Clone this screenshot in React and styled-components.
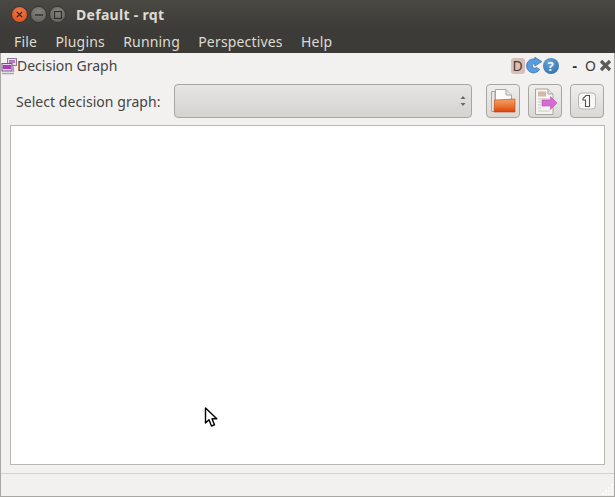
import styled, { createGlobalStyle } from "styled-components";

const GlobalStyle = createGlobalStyle`
  html, body {
    margin: 0;
    padding: 0;
    background: #f2f1f0;
    overflow: hidden;
  }
`;

const menus = ["File", "Plugins", "Running", "Perspectives", "Help"];

const App = () => {
  return (
    <Window>
      <GlobalStyle />
      <TitleBar>
        <WindowButtons>
          <CloseButton>
            <svg width="7" height="7" viewBox="0 0 8 8">
              <path d="M1 1 L7 7 M7 1 L1 7" stroke="#3a2018" strokeWidth="1.6" />
            </svg>
          </CloseButton>
          <WindowButton>
            <svg width="8" height="8" viewBox="0 0 8 8">
              <path d="M0 4 H8" stroke="#2f2e2a" strokeWidth="1.4" />
            </svg>
          </WindowButton>
          <WindowButton>
            <svg width="8" height="8" viewBox="0 0 8 8">
              <rect x="0.5" y="0.5" width="7" height="7" fill="none" stroke="#2f2e2a" strokeWidth="1.2" />
            </svg>
          </WindowButton>
        </WindowButtons>
        <WindowTitle>Default - rqt</WindowTitle>
      </TitleBar>
      <MenuBar>
        {menus.map((menu) => (
          <MenuItem key={menu}>{menu}</MenuItem>
        ))}
      </MenuBar>
      <Body>
        <DockTitle>
          <DockLabel>
            <GraphIcon />
            <span>Decision Graph</span>
          </DockLabel>
          <DockActions>
            <DBadge>D</DBadge>
            <ReloadIcon />
            <HelpBadge>?</HelpBadge>
            <DockDash>-</DockDash>
            <DockFloat>O</DockFloat>
            <CloseIcon />
          </DockActions>
        </DockTitle>
        <Toolbar>
          <SelectLabel>Select decision graph:</SelectLabel>
          <Select>
            <svg width="8" height="14" viewBox="0 0 8 14">
              <path d="M4 2 L6.5 5 H1.5 Z M4 12 L1.5 9 H6.5 Z" fill="#6b6963" />
            </svg>
          </Select>
          <ToolButton $gap={14}>
            <FolderIcon />
          </ToolButton>
          <ToolButton>
            <ExportIcon />
          </ToolButton>
          <ToolButton>
            <OneIcon />
          </ToolButton>
        </Toolbar>
        <Canvas />
        <StatusBar>
          <svg width="12" height="12" viewBox="0 0 12 12">
            <g fill="#fbfbfa">
              <rect x="10" y="1" width="2" height="2" />
              <rect x="7" y="4" width="2" height="2" />
              <rect x="10" y="4" width="2" height="2" />
              <rect x="4" y="7" width="2" height="2" />
              <rect x="7" y="7" width="2" height="2" />
              <rect x="10" y="7" width="2" height="2" />
              <rect x="1" y="10" width="2" height="2" />
              <rect x="4" y="10" width="2" height="2" />
              <rect x="7" y="10" width="2" height="2" />
              <rect x="10" y="10" width="2" height="2" />
            </g>
          </svg>
        </StatusBar>
      </Body>
      <Cursor>
        <svg width="16" height="22" viewBox="0 0 16 22">
          <path
            d="M1.5 1 L1.5 16 L5 12.8 L7.5 19 L10.5 17.8 L8 11.8 L12.8 11.8 Z"
            fill="#fff"
            stroke="#000"
            strokeWidth="1.4"
            strokeLinejoin="round"
          />
        </svg>
      </Cursor>
    </Window>
  );
};

const GraphIcon = () => (
  <svg width="16" height="18" viewBox="0 0 16 18">
    <rect x="6.5" y="1.5" width="9" height="7" fill="#e4dcea" stroke="#8a7a98" />
    <rect x="8" y="3" width="6" height="3" fill="#b07cc0" />
    <rect x="1" y="6.5" width="10" height="7.5" fill="#e8d5ee" stroke="#7d4f8f" />
    <rect x="2" y="8" width="8" height="4" fill="#a63fb5" />
    <path d="M1 16.5 H13 M12.5 9.5 V15" stroke="#a9a7a4" strokeWidth="1.4" fill="none" />
  </svg>
);

const ReloadIcon = () => (
  <svg width="16" height="17" viewBox="0 0 16 17">
    <path
      d="M13.6 12.4 A7 7 0 1 1 8.8 2 L8.8 0.3 L15.8 4.6 L8.8 9 L8.8 6.6 A2.3 2.3 0 1 0 10.4 10.4 Z"
      fill="#5a9ce0"
      stroke="#2c68a8"
      strokeWidth="0.7"
    />
  </svg>
);

const CloseIcon = () => (
  <svg width="13" height="13" viewBox="0 0 13 13">
    <path d="M2 2 L11 11 M11 2 L2 11" stroke="#5c5b58" strokeWidth="3.2" />
  </svg>
);

const FolderIcon = () => (
  <svg width="28" height="28" viewBox="0 0 28 28">
    <path d="M2.5 4.5 H6 V24.5 H2.5 Z" fill="#e8e6e2" stroke="#a8a69f" />
    <path d="M6.5 2.5 H17 L22.5 8 V15 H6.5 Z" fill="#fbfbfa" stroke="#a8a69f" />
    <path d="M17 2.5 V8 H22.5" fill="#e6e4e0" stroke="#a8a69f" />
    <path d="M5 25 L5.5 13 L26 12 V25 Z" fill="url(#folderFill)" stroke="#c8410f" strokeWidth="0.6" />
    <defs>
      <linearGradient id="folderFill" x1="0" y1="0" x2="0" y2="1">
        <stop offset="0" stopColor="#f2a468" />
        <stop offset="0.55" stopColor="#ec7230" />
        <stop offset="1" stopColor="#d7410c" />
      </linearGradient>
    </defs>
  </svg>
);

const ExportIcon = () => (
  <svg width="28" height="28" viewBox="0 0 28 28">
    <path d="M4.5 2 H17 L22 7 V27.5 H4.5 Z" fill="#f5f4f1" stroke="#a8a69f" />
    <path d="M17 2 V7 H22" fill="#e2e0dc" stroke="#a8a69f" />
    <rect x="7" y="4.5" width="8" height="5" fill="#d5b9a6" />
    <path d="M7 12 H19 M7 15 H10 M7 18 H10 M7 21 H10 M7 24 H19" stroke="#c9c7c2" />
    <path d="M11 13 H19.5 V9.5 L26 16 L19.5 22.5 V19 H11 Z" fill="#d86ad4" stroke="#bb4ab9" strokeWidth="0.6" />
  </svg>
);

const OneIcon = () => (
  <svg width="20" height="18" viewBox="0 0 20 18">
    <rect x="1.5" y="1" width="17" height="16" rx="3.5" fill="#f8f8f7" stroke="#b5b3ae" />
    <path d="M9 3.5 H12.5 V14.5 H8.5 V8 H6 V6.5 Z" fill="#fdfdfc" stroke="#55534e" strokeWidth="1.1" />
  </svg>
);

const Window = styled.div`
  position: relative;
  width: 615px;
  height: 497px;
  background: #3c3b37;
  font-family: "Noto Sans", "Open Sans", sans-serif;
  overflow: hidden;
`;

const TitleBar = styled.div`
  display: flex;
  align-items: center;
  height: 30px;
  padding: 0 0 0 11px;
  box-sizing: border-box;
  background: linear-gradient(#4a4944, #3c3b37);
`;

const WindowButtons = styled.div`
  display: flex;
  align-items: center;
  gap: 2px;
  margin-top: -1px;
`;

const WindowButton = styled.div`
  display: grid;
  place-items: center;
  width: 17px;
  height: 17px;
  box-sizing: border-box;
  border-radius: 50%;
  border: 1px solid #35342f;
  background: radial-gradient(circle at 50% 30%, #85837d, #5f5d57);
`;

const CloseButton = styled(WindowButton)`
  background: radial-gradient(circle at 50% 30%, #f27a4a, #de4815);
`;

const WindowTitle = styled.div`
  margin-left: 10px;
  margin-top: -1px;
  color: #dfdbd2;
  font-size: 14px;
  font-weight: 700;
  letter-spacing: 0.3px;
`;

const MenuBar = styled.div`
  display: flex;
  align-items: center;
  gap: 18.3px;
  height: 23px;
  padding-left: 14px;
  padding-bottom: 1px;
  box-sizing: border-box;
  background: #3c3b37;
`;

const MenuItem = styled.div`
  color: #dfdbd2;
  font-size: 14px;
  letter-spacing: 0.17px;
`;

const Body = styled.div`
  display: flex;
  flex-direction: column;
  height: 444px;
  box-sizing: border-box;
  background: #f2f1f0;
  border-left: 1px solid #a9a7a3;
  border-right: 1px solid #a9a7a3;
  border-bottom: 1px solid #a9a7a3;
`;

const DockTitle = styled.div`
  display: flex;
  align-items: center;
  justify-content: space-between;
  height: 25px;
  flex: none;
  padding-right: 2px;
`;

const DockLabel = styled.div`
  display: flex;
  align-items: center;
  color: #444;
  font-size: 14px;
`;

const DockActions = styled.div`
  display: flex;
  align-items: center;
`;

const DBadge = styled.div`
  width: 14px;
  height: 16px;
  margin-right: 1px;
  line-height: 16px;
  text-align: center;
  border-radius: 3px;
  background: #d9bfb4;
  color: #45403d;
  font-size: 14px;
`;

const HelpBadge = styled.div`
  width: 16px;
  height: 16px;
  margin-left: 1px;
  line-height: 16px;
  text-align: center;
  border-radius: 50%;
  background: radial-gradient(circle at 40% 30%, #6aa6dc, #2a669f);
  color: #f3f6fa;
  font-size: 13px;
  font-weight: 700;
`;

const DockDash = styled.div`
  margin-left: 14px;
  color: #2b2b2b;
  font-size: 14px;
  font-weight: 700;
`;

const DockFloat = styled.div`
  margin-left: 8px;
  margin-right: 3px;
  color: #3a3a3a;
  font-size: 14px;
`;

const Toolbar = styled.div`
  display: flex;
  align-items: center;
  height: 34px;
  flex: none;
  margin-top: 6px;
  padding-left: 15px;
`;

const SelectLabel = styled.div`
  width: 158px;
  flex: none;
  color: #444;
  font-size: 14px;
  letter-spacing: 0.05px;
`;

const Select = styled.div`
  display: flex;
  align-items: center;
  justify-content: flex-end;
  width: 298px;
  height: 34px;
  flex: none;
  box-sizing: border-box;
  padding-right: 4px;
  border: 1px solid #a8a6a2;
  border-radius: 4px;
  background: linear-gradient(#e6e5e3, #d4d3d0);
`;

const ToolButton = styled.div`
  display: grid;
  place-items: center;
  width: 34px;
  height: 34px;
  flex: none;
  box-sizing: border-box;
  margin-left: ${(props) => props.$gap || 8}px;
  border: 1px solid #a8a6a2;
  border-radius: 4px;
  background: linear-gradient(#efeeec, #d9d8d5);
`;

const Canvas = styled.div`
  flex: none;
  height: 340px;
  margin: 7px 9px 0;
  box-sizing: border-box;
  background: #fff;
  border: 1px solid #b9b7b2;
`;

const StatusBar = styled.div`
  display: flex;
  align-items: flex-end;
  justify-content: flex-end;
  flex: 1;
  margin-top: 8px;
  border-top: 1px solid #d3d1cd;
  padding: 0 1px 1px 0;
`;

const Cursor = styled.div`
  position: absolute;
  left: 204px;
  top: 407px;
  line-height: 0;
`;

export default App;
